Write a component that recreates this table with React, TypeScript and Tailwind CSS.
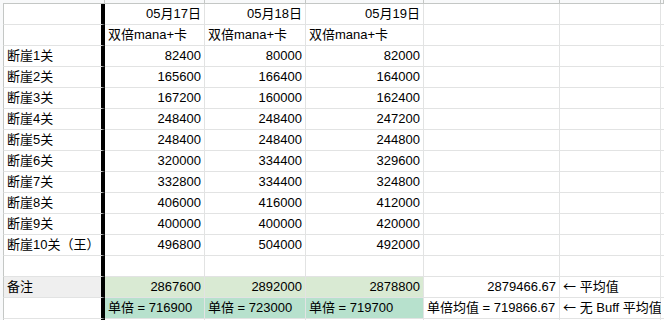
import React from 'react';

const cols = ['w-[102px]', 'w-[100px]', 'w-[101px]', 'w-[118px]', 'w-[136px]', 'w-[101px]', 'flex-1'];

const rows: string[][] = [
  ['断崖1关', '82400', '80000', '82000'],
  ['断崖2关', '165600', '166400', '164000'],
  ['断崖3关', '167200', '160000', '162400'],
  ['断崖4关', '248400', '248400', '247200'],
  ['断崖5关', '248400', '248400', '244800'],
  ['断崖6关', '320000', '334400', '329600'],
  ['断崖7关', '332800', '334400', '324800'],
  ['断崖8关', '406000', '416000', '412000'],
  ['断崖9关', '400000', '400000', '420000'],
  ['断崖10关（王）', '496800', '504000', '492000'],
];

type CellProps = {
  i: number;
  right?: boolean;
  bg?: string;
  children?: React.ReactNode;
};

const Cell: React.FC<CellProps> = ({ i, right, bg, children }) => {
  const edge =
    i === 0
      ? 'border-l border-l-[#c4c7c5] border-r-4 border-r-black'
      : 'border-r border-r-[#e2e3e3]';
  return (
    <div
      className={`${cols[i]} ${edge} ${bg ?? 'bg-white'} shrink-0 h-full border-b border-b-[#e2e3e3] flex items-end pb-[2px] px-[3px] whitespace-nowrap overflow-visible ${
        right ? 'justify-end' : 'justify-start'
      }`}
    >
      <span className="leading-[16px]">{children}</span>
    </div>
  );
};

const Row: React.FC<{ cells: React.ReactNode[]; right?: boolean[]; bg?: (string | undefined)[] }> = ({
  cells,
  right = [],
  bg = [],
}) => (
  <div className="flex h-[21px]">
    {cols.map((_, i) => (
      <Cell key={i} i={i} right={right[i]} bg={bg[i]}>
        {cells[i]}
      </Cell>
    ))}
  </div>
);

const Arrow = () => <span className="font-['Noto_Sans_CJK_SC',sans-serif]">←</span>;

export default function App() {
  return (
    <div className="w-[664px] h-[320px] overflow-hidden bg-white text-black text-[13px] font-['Liberation_Sans','Noto_Sans_CJK_SC',sans-serif]">
      {/* header strip above the grid */}
      <div className="flex h-[3px] bg-[#f8f9fa]">
        <div className="w-[3px] shrink-0" />
        {cols.map((c, i) => (
          <div key={i} className={`${c} shrink-0 ${i === 0 ? 'w-[99px]' : ''} border-r border-r-[#c4c7c5]`} />
        ))}
      </div>
      <div className="flex">
        <div className="w-[3px] shrink-0 bg-[#f8f9fa]" />
        <div className="flex-1 border-t border-t-[#c4c7c5]">
          <Row cells={['', '05月17日', '05月18日', '05月19日']} right={[false, true, true, true]} />
          <Row cells={['', '双倍mana+卡', '双倍mana+卡', '双倍mana+卡']} />
          {rows.map((r, k) => (
            <Row key={k} cells={r} right={[false, true, true, true]} />
          ))}
          <Row cells={[]} />
          <Row
            cells={['备注', '2867600', '2892000', '2878800', '2879466.67', <><Arrow /> 平均值</>]}
            right={[false, true, true, true, true, false]}
            bg={['bg-[#efefef]', 'bg-[#d9ead3]', 'bg-[#d9ead3]', 'bg-[#d9ead3]']}
          />
          <Row
            cells={['', '单倍 = 716900', '单倍 = 723000', '单倍 = 719700', '单倍均值 = 719866.67', <><Arrow /> 无 Buff 平均值</>]}
            bg={[undefined, 'bg-[#b7e1cd]', 'bg-[#b7e1cd]', 'bg-[#b7e1cd]']}
          />
          <Row cells={[]} />
        </div>
      </div>
    </div>
  );
}
